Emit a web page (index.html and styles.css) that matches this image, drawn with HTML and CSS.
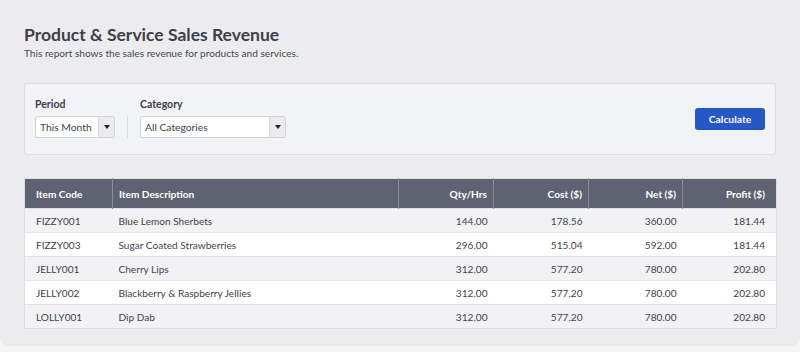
FILE: index.html
```html
<!DOCTYPE html>
<html lang="en">
<head>
    <meta charset="UTF-8">
    <title>Product &amp; Service Sales Revenue</title>
    <link rel="stylesheet" href="styles.css">
</head>
<body>
    <div class="page">
        <div class="heading">
            <h1>Product &amp; Service Sales Revenue</h1>
            <p>This report shows the sales revenue for products and services.</p>
        </div>

        <div class="filters">
            <div class="field">
                <label>Period</label>
                <div class="select period">
                    <span>This Month</span>
                    <span class="arrow"></span>
                </div>
            </div>
            <div class="divider"></div>
            <div class="field">
                <label>Category</label>
                <div class="select category">
                    <span>All Categories</span>
                    <span class="arrow"></span>
                </div>
            </div>
            <button class="calc">Calculate</button>
        </div>

        <table class="report">
            <colgroup>
                <col class="c-code">
                <col class="c-desc">
                <col class="c-qty">
                <col class="c-cost">
                <col class="c-net">
                <col class="c-profit">
            </colgroup>
            <thead>
                <tr>
                    <th>Item Code</th>
                    <th>Item Description</th>
                    <th class="num">Qty/Hrs</th>
                    <th class="num">Cost ($)</th>
                    <th class="num">Net ($)</th>
                    <th class="num">Profit ($)</th>
                </tr>
            </thead>
            <tbody>
                <tr>
                    <td>FIZZY001</td>
                    <td>Blue Lemon Sherbets</td>
                    <td class="num">144.00</td>
                    <td class="num">178.56</td>
                    <td class="num">360.00</td>
                    <td class="num">181.44</td>
                </tr>
                <tr>
                    <td>FIZZY003</td>
                    <td>Sugar Coated Strawberries</td>
                    <td class="num">296.00</td>
                    <td class="num">515.04</td>
                    <td class="num">592.00</td>
                    <td class="num">181.44</td>
                </tr>
                <tr>
                    <td>JELLY001</td>
                    <td>Cherry Lips</td>
                    <td class="num">312.00</td>
                    <td class="num">577.20</td>
                    <td class="num">780.00</td>
                    <td class="num">202.80</td>
                </tr>
                <tr>
                    <td>JELLY002</td>
                    <td>Blackberry &amp; Raspberry Jellies</td>
                    <td class="num">312.00</td>
                    <td class="num">577.20</td>
                    <td class="num">780.00</td>
                    <td class="num">202.80</td>
                </tr>
                <tr>
                    <td>LOLLY001</td>
                    <td>Dip Dab</td>
                    <td class="num">312.00</td>
                    <td class="num">577.20</td>
                    <td class="num">780.00</td>
                    <td class="num">202.80</td>
                </tr>
            </tbody>
        </table>
    </div>
</body>
</html>
```

FILE: styles.css
```css
body, html {
    margin: 0;
    background: #f5f5f6;
    font-family: Lato, "Open Sans", sans-serif;
    color: #3c3f47;
}

.page {
    height: 346px;
    box-sizing: border-box;
    padding: 24px 24px 0 24px;
    background: #ececee;
    border-radius: 0 0 8px 8px;
}

.heading h1 {
    margin: 0;
    font-size: 17.5px;
    font-weight: 700;
    line-height: 22px;
    color: #3d4049;
}

.heading p {
    margin: 1px 0 0 0;
    font-size: 10.1px;
    line-height: 13px;
    color: #454851;
}

.filters {
    display: flex;
    align-items: flex-end;
    margin-top: 23px;
    height: 72px;
    box-sizing: border-box;
    padding: 0 10px 16px 10px;
    background: #f2f3f5;
    border: 1px solid #dcdde1;
    border-radius: 3px;
}

.field label {
    display: block;
    font-size: 10.5px;
    font-weight: 700;
    color: #3d4049;
    margin-bottom: 6px;
}

.select {
    display: flex;
    height: 22px;
    box-sizing: border-box;
    background: #ffffff;
    border: 1px solid #d2d3d7;
    border-radius: 2px;
    font-size: 10.3px;
    color: #3f424a;
}

.select span:first-child {
    flex: 1;
    padding: 0 4px;
    line-height: 20px;
}

.select .arrow {
    position: relative;
    width: 15px;
    background: #ebebed;
    border-left: 1px solid #dcdde0;
}

.select .arrow::after {
    content: "";
    position: absolute;
    left: 5px;
    top: 8px;
    border-left: 3px solid transparent;
    border-right: 3px solid transparent;
    border-top: 4px solid #222;
}

.period {
    width: 80px;
}

.category {
    width: 146px;
}

.divider {
    width: 1px;
    height: 22px;
    margin: 0 12px;
    background: #dcdde0;
}

.calc {
    margin: 0 0 8px auto;
    width: 70px;
    height: 22px;
    padding: 0;
    background: #2557c6;
    color: white;
    border: none;
    border-radius: 3px;
    font-family: Lato, sans-serif;
    font-size: 10.3px;
    font-weight: 700;
}

.report {
    margin-top: 23px;
    width: 752px;
    border-collapse: collapse;
    font-size: 10.1px;
    table-layout: fixed;
    border: 1px solid #dcdde0;
}

.c-code { width: 88px; }
.c-desc { width: 286px; }
.c-qty { width: 95px; }
.c-cost { width: 95px; }
.c-net { width: 94px; }
.c-profit { width: 94px; }

.report th {
    height: 29px;
    padding: 0 6px;
    background: #5f6270;
    color: #ffffff;
    font-weight: 700;
    text-align: left;
    border-left: 1px solid #8a8c97;
}

.report th:first-child {
    border-left: none;
}

.report td {
    height: 23px;
    padding: 0 6px;
    color: #3f424a;
    border-top: 1px solid #e2e3e6;
}

.report th:first-child, .report td:first-child {
    padding-left: 11px;
}

.report th:last-child, .report td:last-child {
    padding-right: 11px;
}

.report tbody tr:nth-child(odd) td {
    background: #f2f2f4;
}

.report tbody tr:nth-child(even) td {
    background: #ffffff;
}

.report .num {
    text-align: right;
}
```
